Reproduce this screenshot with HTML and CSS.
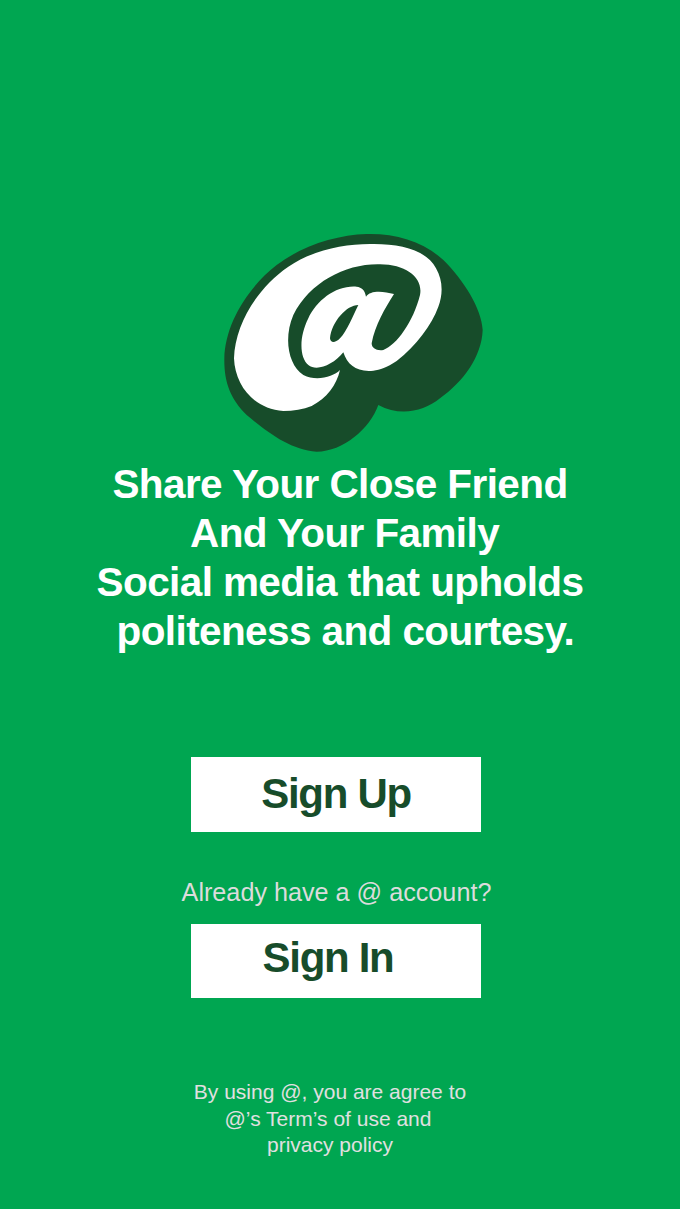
FILE: index.html
```html
<!DOCTYPE html>
<html lang="en">
<head>
<meta charset="utf-8">
<title>@</title>
<link rel="stylesheet" href="styles.css">
</head>
<body>
<main class="screen">
  <svg class="logo" viewBox="0 0 855 705" aria-label="@ logo" role="img">
    <path class="logo-dark" d="M470 27C560 25 640 50 700 105C760 165 815 250 818 315C815 395 760 470 690 520C640 560 570 575 505 540C480 610 400 680 320 680C240 675 170 620 110 570C60 520 42 470 43 400C45 300 110 190 200 120C280 60 380 30 470 27Z"/>
    <path class="logo-white" d="M390 435C380 480 350 520 305 543C280 553 250 558 220 558C130 552 75 480 72 400C75 300 140 190 235 125C310 75 400 57 480 57C570 55 650 75 678 130C698 165 700 205 685 245C665 300 620 360 560 408C530 428 510 435 490 437C440 442 412 420 400 382C370 420 320 440 295 420C270 400 265 340 295 280C320 225 380 180 440 185C455 187 465 195 468 215C480 195 520 198 552 207C525 250 495 300 485 355C485 370 500 378 520 375C560 360 610 290 630 210C640 160 590 118 510 118C410 115 300 170 250 270C220 340 235 420 280 450C320 470 370 455 390 435Z"/>
    <path class="logo-dark" d="M445 240C410 240 365 290 360 340C362 355 375 355 390 340C410 320 430 270 445 240Z"/>
  </svg>
  <h1 class="headline">Share Your Close Friend
 And Your Family
Social media that upholds
 politeness and courtesy.</h1>
  <a class="btn btn-up" href="#">Sign Up</a>
  <p class="already">Already have a @ account?</p>
  <a class="btn btn-in" href="#">Sign In</a>
  <p class="legal"><span>By using @, you are agree to</span><span class="legal-2">@’s Term’s of use and</span><span>privacy policy</span></p>
</main>
</body>
</html>
```
FILE: styles.css
```css
* { box-sizing: border-box; }
html, body { margin: 0; height: 100%; }
body { background: #00a651; font-family: "Liberation Sans", Arial, sans-serif; }
.screen {
  width: 680px;
  height: 1209px;
  overflow: hidden;
  display: flex;
  flex-direction: column;
  align-items: center;
  padding-top: 225px;
}
.logo { width: 285px; height: 235px; margin-left: 25px; flex: none; }
.logo-dark { fill: #174c2a; }
.logo-white { fill: #fff; }
.headline {
  margin: 0;
  width: 100%;
  font-size: 40.5px;
  line-height: 49px;
  letter-spacing: -0.6px;
  font-weight: 700;
  color: #fff;
  text-align: center;
  white-space: pre;
}
.btn {
  display: flex;
  align-items: center;
  justify-content: center;
  width: 290px;
  height: 75px;
  margin-left: -8px;
  background: #fff;
  color: #174c2a;
  font-size: 42px;
  letter-spacing: -1.3px;
  font-weight: 700;
  text-decoration: none;
}
.btn-up { margin-top: 101px; padding-bottom: 2px; }
.btn-in { height: 74px; padding-right: 16px; padding-bottom: 6px; }
.already {
  margin: 45px 0 0 -7px;
  height: 47px;
  font-size: 25.2px;
  line-height: 30px;
  color: #dcdcdc;
}
.legal {
  display: flex;
  flex-direction: column;
  align-items: center;
  margin: 81px 0 0 -20px;
  font-size: 21px;
  line-height: 26.5px;
  color: #e0e0e0;
}
.legal-2 { margin-left: -4px; }
```
